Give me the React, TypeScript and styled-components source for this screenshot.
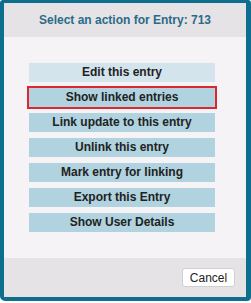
import React from 'react'
import styled, { createGlobalStyle } from 'styled-components'

const GlobalStyle = createGlobalStyle`
  html, body {
    margin: 0;
    padding: 0;
    background: #ffffff;
  }
  body {
    font-family: "Liberation Sans", Arial, sans-serif;
  }
`

const Dialog = styled.div`
  width: 251px;
  height: 301px;
  box-sizing: border-box;
  border-style: solid;
  border-color: #0d6e8e;
  border-width: 3px 5px 4px 4px;
  border-radius: 3px 3px 4px 5px;
  display: flex;
  flex-direction: column;
  background: #f6f3f6;
`

const Header = styled.div`
  height: 34px;
  display: flex;
  align-items: center;
  justify-content: center;
  background: #e6e3e6;
  color: #2a6b89;
  font-size: 12px;
  font-weight: bold;
`

const Body = styled.div`
  flex: 1;
  display: flex;
  flex-direction: column;
  gap: 6px;
  padding: 26px 0 0 25px;
  background: #f6f3f6;
`

const ActionButton = styled.button<{ $light?: boolean; $selected?: boolean }>`
  width: 186px;
  height: 19px;
  padding: 0;
  border: none;
  background: ${p => (p.$light ? '#d3e4ed' : '#b0d3df')};
  box-shadow: ${p => (p.$selected ? '0 0 0 2px #dc2630' : 'none')};
  color: #222;
  font-family: "Liberation Sans", Arial, sans-serif;
  font-size: 12px;
  font-weight: bold;
  line-height: 19px;
  text-align: center;
  cursor: pointer;
`

const Footer = styled.div`
  height: 39px;
  box-sizing: border-box;
  display: flex;
  align-items: center;
  justify-content: flex-end;
  padding-right: 11px;
  background: #e6e3e6;
`

const CancelButton = styled.button`
  width: 53px;
  height: 19px;
  padding: 0;
  background: #ffffff;
  border: 1px solid #cfcfcf;
  border-radius: 3px;
  color: #222;
  font-family: "Liberation Sans", Arial, sans-serif;
  font-size: 12px;
  cursor: pointer;
`

const actions = [
  'Edit this entry',
  'Show linked entries',
  'Link update to this entry',
  'Unlink this entry',
  'Mark entry for linking',
  'Export this Entry',
  'Show User Details',
]

const App = () => {
  return (
    <>
      <GlobalStyle />
      <Dialog>
        <Header>Select an action for Entry: 713</Header>
        <Body>
          {actions.map((label, i) => (
            <ActionButton key={label} $light={i === 0} $selected={i === 1}>
              {label}
            </ActionButton>
          ))}
        </Body>
        <Footer>
          <CancelButton>Cancel</CancelButton>
        </Footer>
      </Dialog>
    </>
  )
}

export default App
